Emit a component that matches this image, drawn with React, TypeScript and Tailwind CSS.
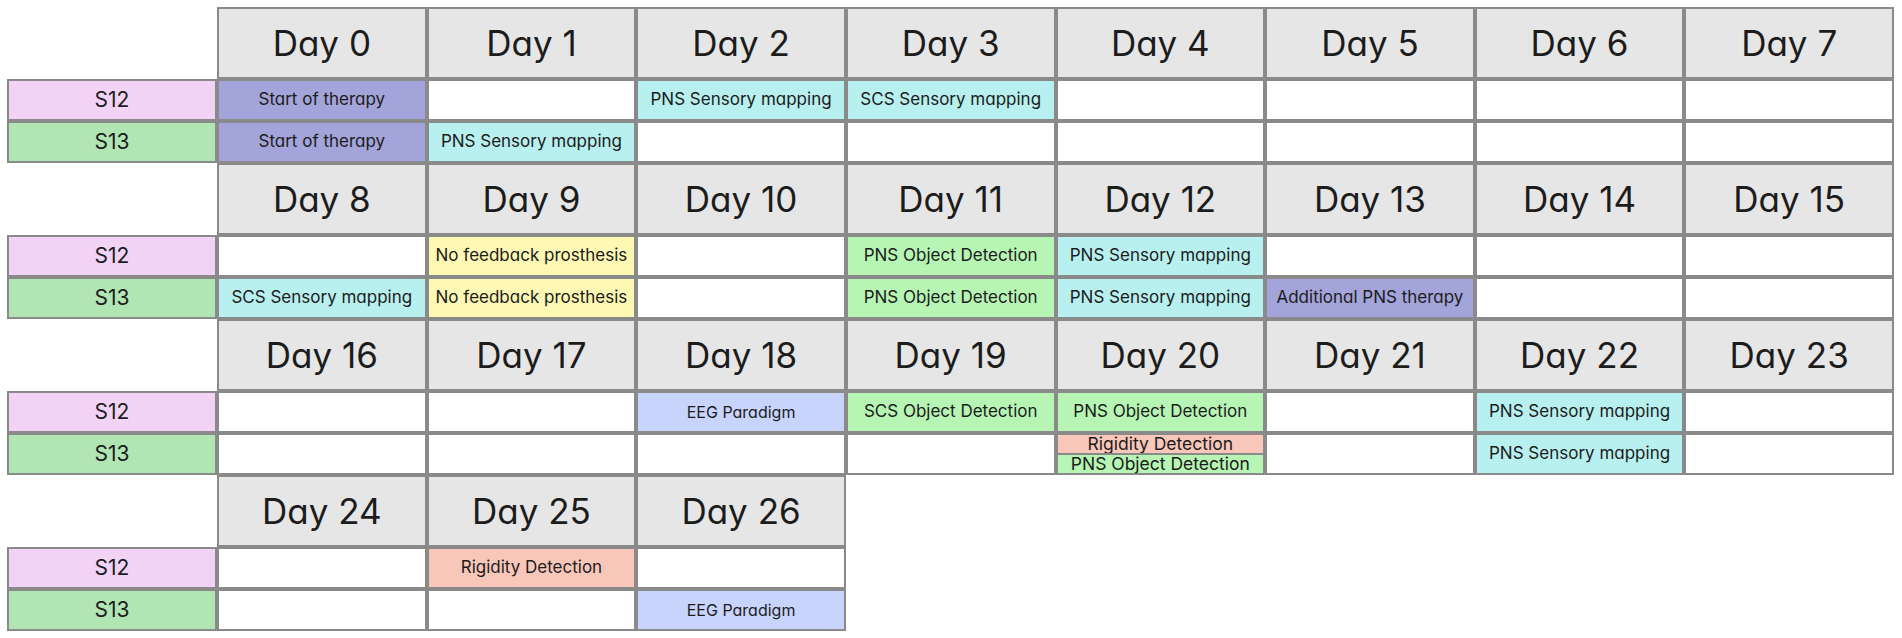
import React from "react";

type Task = "start" | "pnsSens" | "scsSens" | "noFb" | "pnsObj" | "scsObj" | "addPns" | "eeg" | "rig" | "split" | "";

// label + bg colour for each kind of session
const TASKS: Record<Exclude<Task, "" | "split">, { label: string; cls: string }> = {
  start: { label: "Start of therapy", cls: "bg-[#a3a4da]" },
  pnsSens: { label: "PNS Sensory mapping", cls: "bg-[#b8f0f0]" },
  scsSens: { label: "SCS Sensory mapping", cls: "bg-[#b8f0f0]" },
  noFb: { label: "No feedback prosthesis", cls: "bg-[#fdf8b3]" },
  pnsObj: { label: "PNS Object Detection", cls: "bg-[#b6f5b4]" },
  scsObj: { label: "SCS Object Detection", cls: "bg-[#b6f5b4]" },
  addPns: { label: "Additional PNS therapy", cls: "bg-[#a3a4da]" },
  eeg: { label: "EEG Paradigm", cls: "bg-[#c8d4fb] text-[16px]" },
  rig: { label: "Rigidity Detection", cls: "bg-[#f9c6ba]" },
};

const blocks: { days: number[]; s12: Task[]; s13: Task[] }[] = [
  {
    days: [0, 1, 2, 3, 4, 5, 6, 7],
    s12: ["start", "", "pnsSens", "scsSens", "", "", "", ""],
    s13: ["start", "pnsSens", "", "", "", "", "", ""],
  },
  {
    days: [8, 9, 10, 11, 12, 13, 14, 15],
    s12: ["", "noFb", "", "pnsObj", "pnsSens", "", "", ""],
    s13: ["scsSens", "noFb", "", "pnsObj", "pnsSens", "addPns", "", ""],
  },
  {
    days: [16, 17, 18, 19, 20, 21, 22, 23],
    s12: ["", "", "eeg", "scsObj", "pnsObj", "", "pnsSens", ""],
    s13: ["", "", "", "", "split", "", "pnsSens", ""],
  },
  {
    days: [24, 25, 26],
    s12: ["", "rig", ""],
    s13: ["", "", "eeg"],
  },
];

const border = "border-2 border-[#8a8a8a]";

function Cell({ task }: { task: Task }) {
  if (task === "split") {
    // Day 20 / S13 holds two sessions stacked
    return (
      <div className={`${border} flex flex-col bg-white text-[17.5px] leading-none whitespace-nowrap`}>
        <div className="flex-1 flex items-center justify-center bg-[#f9c6ba]">Rigidity Detection</div>
        <div className="h-[2px] bg-[#8a8a8a]" />
        <div className="flex-1 flex items-center justify-center bg-[#b6f5b4]">PNS Object Detection</div>
      </div>
    );
  }
  if (!task) return <div className={`${border} bg-white`} />;
  const t = TASKS[task];
  return (
    <div className={`${border} ${t.cls} flex items-center justify-center whitespace-nowrap`}>
      {t.label}
    </div>
  );
}

export default function App() {
  return (
    <div className="w-[1902px] h-[638px] bg-white pt-[7px] pl-[7px] text-[#1c1c1c] font-['Inter','Noto_Sans',sans-serif] [font-feature-settings:'cv11'] text-[17px] overflow-hidden">
      {blocks.map((b, i) => (
        <div
          key={i}
          className="grid w-[1887px] grid-cols-[210px_repeat(8,minmax(0,1fr))] grid-rows-[72px_42px_42px]"
        >
          {/* header row */}
          <div />
          {b.days.map((d) => (
            <div key={d} className={`${border} bg-[#e6e6e6] flex items-center justify-center text-[35px]`}>
              Day {d}
            </div>
          ))}
          {b.days.length < 8 && <div className="col-span-5" />}

          {/* S12 */}
          <div className={`${border} bg-[#f2d3f5] flex items-center justify-center text-[21px]`}>S12</div>
          {b.s12.map((t, j) => (
            <Cell key={j} task={t} />
          ))}
          {b.days.length < 8 && <div className="col-span-5" />}

          {/* S13 */}
          <div className={`${border} bg-[#b2e5b4] flex items-center justify-center text-[21px]`}>S13</div>
          {b.s13.map((t, j) => (
            <Cell key={j} task={t} />
          ))}
        </div>
      ))}
    </div>
  );
}
